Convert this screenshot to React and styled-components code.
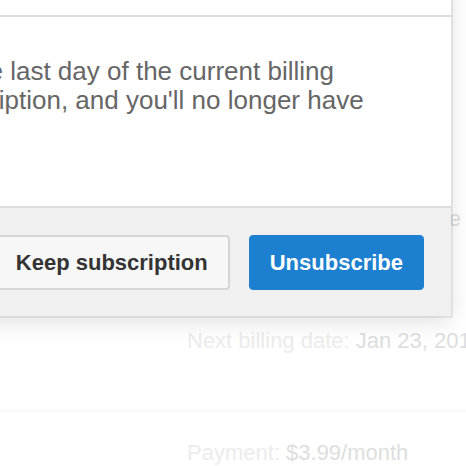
import React from "react";
import styled, { createGlobalStyle } from "styled-components";

const GlobalStyle = createGlobalStyle`
  html, body {
    margin: 0;
    padding: 0;
    background: #ffffff;
    overflow: hidden;
    font-family: "Liberation Sans", Arial, sans-serif;
  }
`;

const Root = styled.div`
  position: relative;
  width: 100vw;
  height: 100vh;
  overflow: hidden;
`;

const Page = styled.div`
  padding: 206px 0 0 187px;
`;

const InfoRow = styled.div`
  font-size: 22px;
  line-height: 26px;
  white-space: nowrap;
  color: #ececec;
  margin-top: ${(p) => p.$gap || 0}px;
`;

const Value = styled.span`
  color: #dedede;
`;

const Divider = styled.div`
  height: 2px;
  background: #f9f9f9;
  margin: 56px 0 0 -187px;
`;

const Modal = styled.div`
  position: absolute;
  top: -57px;
  left: -529px;
  width: 980px;
  background: #ffffff;
  box-shadow: 0 0 0 2px rgba(0, 0, 0, 0.07), 0 6px 22px rgba(0, 0, 0, 0.12);
  display: flex;
  flex-direction: column;
`;

const Header = styled.div`
  height: 72px;
  border-bottom: 2px solid #dddddd;
  display: flex;
  align-items: center;
  padding: 0 30px;
  font-size: 28px;
  font-weight: bold;
  color: #333;
`;

const Body = styled.div`
  height: 149px;
  padding: 40px 30px 0;
  font-size: 26px;
  line-height: 29px;
  color: #666666;
  white-space: nowrap;
`;

const Footer = styled.div`
  border-top: 2px solid #dddddd;
  background: #f0f0f0;
  padding: 27px 27px 26px;
  display: flex;
  justify-content: flex-end;
  gap: 19px;
`;

const Button = styled.button`
  height: 55px;
  padding: 0 20px;
  border-radius: 4px;
  font-family: "Liberation Sans", Arial, sans-serif;
  font-size: 22px;
  font-weight: bold;
  cursor: pointer;
  border: ${(p) => (p.$primary ? "1px solid #1c7fcf" : "2px solid #d6d6d6")};
  background: ${(p) => (p.$primary ? "#1c7fcf" : "#f7f7f7")};
  color: ${(p) => (p.$primary ? "#ffffff" : "#333333")};
`;

export default function App() {
  return (
    <Root>
      <GlobalStyle />
      <Page>
        <InfoRow>
          Subscription status: <Value>Inactive</Value>
        </InfoRow>
        <InfoRow $gap={96}>
          Next billing date: <Value>Jan 23, 2017</Value>
        </InfoRow>
        <Divider />
        <InfoRow $gap={28}>
          Payment: <Value>$3.99/month</Value>
        </InfoRow>
      </Page>
      <Modal>
        <Header>Unsubscribe from Premium?</Header>
        <Body>
          Your subscription will remain active until the last day of the current billing
          <br />
          period. Afterwards, we'll cancel your subscription, and you'll no longer have
          <br />
          access to premium features.
        </Body>
        <Footer>
          <Button>Keep subscription</Button>
          <Button $primary>Unsubscribe</Button>
        </Footer>
      </Modal>
    </Root>
  );
}
